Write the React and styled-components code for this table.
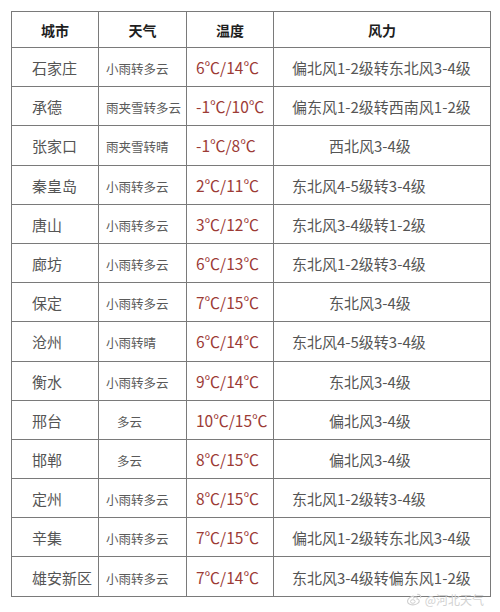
import React from "react";
import styled, { createGlobalStyle } from "styled-components";

const GlobalStyle = createGlobalStyle`
  html, body {
    margin: 0;
    padding: 0;
    background: #fff;
  }
  body {
    font-family: "Noto Sans CJK SC", "Noto Sans", sans-serif;
  }
`;

const Page = styled.div`
  width: 500px;
  height: 612px;
  padding: 11px 10px 0 11px;
  box-sizing: border-box;
  overflow: hidden;
`;

const Table = styled.table`
  width: 479px;
  border-collapse: collapse;
  table-layout: fixed;
  border: 1px solid #6e6e6e;
`;

const HeadCell = styled.th`
  height: 35px;
  padding: 0;
  border: 1px solid #7a7a7a;
  font-size: 14px;
  font-weight: 700;
  color: #1e1e1e;
  text-align: center;
  vertical-align: middle;
`;

const Cell = styled.td`
  height: 38.2px;
  padding: 0 0 0 ${(props) => props.$indent || 0}px;
  border: 1px solid #7a7a7a;
  vertical-align: middle;
  white-space: nowrap;
  overflow: hidden;
`;

const City = styled.span`
  font-size: 15px;
  color: #555;
`;

const Weather = styled.span`
  font-size: 12.5px;
  color: #5a5a5a;
`;

const Temp = styled.span`
  font-size: 15.5px;
  color: #9c3b36;
`;

const Wind = styled.span`
  font-size: 15px;
  color: #555;
`;

const Footer = styled.div`
  display: flex;
  justify-content: flex-end;
  align-items: center;
  gap: 3px;
  margin-top: -4px;
  padding-right: 6px;
  color: #d2d2d2;
  font-size: 12px;
  line-height: 14px;
`;

const rows = [
  ["石家庄", "小雨转多云", "6℃/14℃", "偏北风1-2级转东北风3-4级"],
  ["承德", "雨夹雪转多云", "-1℃/10℃", "偏东风1-2级转西南风1-2级"],
  ["张家口", "雨夹雪转晴", "-1℃/8℃", "西北风3-4级", true],
  ["秦皇岛", "小雨转多云", "2℃/11℃", "东北风4-5级转3-4级"],
  ["唐山", "小雨转多云", "3℃/12℃", "东北风3-4级转1-2级"],
  ["廊坊", "小雨转多云", "6℃/13℃", "东北风1-2级转3-4级"],
  ["保定", "小雨转多云", "7℃/15℃", "东北风3-4级", true],
  ["沧州", "小雨转晴", "6℃/14℃", "东北风4-5级转3-4级"],
  ["衡水", "小雨转多云", "9℃/14℃", "东北风3-4级", true],
  ["邢台", "多云", "10℃/15℃", "偏北风3-4级", true],
  ["邯郸", "多云", "8℃/15℃", "偏北风3-4级", true],
  ["定州", "小雨转多云", "8℃/15℃", "东北风1-2级转3-4级"],
  ["辛集", "小雨转多云", "7℃/15℃", "偏北风1-2级转东北风3-4级"],
  ["雄安新区", "小雨转多云", "7℃/14℃", "东北风3-4级转偏东风1-2级"],
];

function WeiboLogo() {
  return (
    <svg width="16" height="13" viewBox="0 0 16 13" fill="none">
      <path
        d="M6.5 3.2C3.6 4.4 1.2 6.8 1.6 8.9c.4 2.1 3.4 3.4 6.6 2.9 3.2-.5 5.4-2.4 5-4.3-.2-1.1-1.3-1.5-2.2-1.5.5-1.1.3-2-1-2-.8 0-1.6.4-2.3.8.4-1 .2-1.9-1.2-1.6z"
        stroke="#cfcfcf"
        strokeWidth="1.1"
      />
      <ellipse cx="6.8" cy="8.5" rx="2.3" ry="1.8" stroke="#cfcfcf" strokeWidth="1" />
      <path d="M11.5 1.2a3 3 0 0 1 3.2 3.4" stroke="#cfcfcf" strokeWidth="1.1" strokeLinecap="round" />
    </svg>
  );
}

export default function App() {
  return (
    <>
      <GlobalStyle />
      <Page>
        <Table>
          <colgroup>
            <col style={{ width: 87 }} />
            <col style={{ width: 88 }} />
            <col style={{ width: 87 }} />
            <col style={{ width: 217 }} />
          </colgroup>
          <thead>
            <tr>
              <HeadCell>城市</HeadCell>
              <HeadCell>天气</HeadCell>
              <HeadCell>温度</HeadCell>
              <HeadCell>风力</HeadCell>
            </tr>
          </thead>
          <tbody>
            {rows.map(([city, weather, temp, wind, short]) => (
              <tr key={city}>
                <Cell $indent={20}>
                  <City>{city}</City>
                </Cell>
                <Cell $indent={weather.length <= 2 ? 18 : 7}>
                  <Weather>{weather}</Weather>
                </Cell>
                <Cell $indent={9}>
                  <Temp>{temp}</Temp>
                </Cell>
                <Cell $indent={short ? 55 : 18}>
                  <Wind>{wind}</Wind>
                </Cell>
              </tr>
            ))}
          </tbody>
        </Table>
        <Footer>
          <WeiboLogo />
          <span>@河北天气</span>
        </Footer>
      </Page>
    </>
  );
}
